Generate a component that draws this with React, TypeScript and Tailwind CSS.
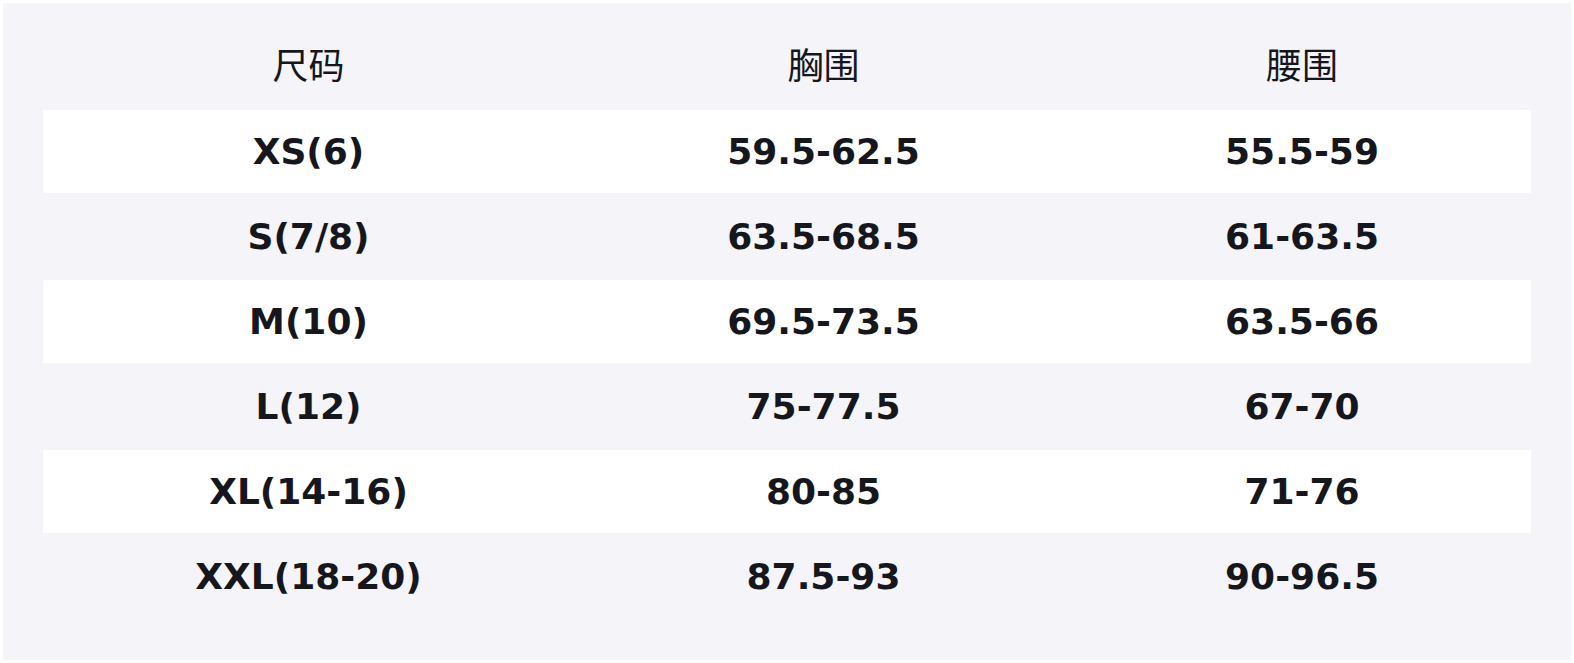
import * as React from 'react';

const rows = [
  ['XS(6)', '59.5-62.5', '55.5-59'],
  ['S(7/8)', '63.5-68.5', '61-63.5'],
  ['M(10)', '69.5-73.5', '63.5-66'],
  ['L(12)', '75-77.5', '67-70'],
  ['XL(14-16)', '80-85', '71-76'],
  ['XXL(18-20)', '87.5-93', '90-96.5'],
];

const headers = ['尺码', '胸围', '腰围'];

export default function App() {
  return (
    <div className="w-[1574px] h-[663px] bg-white p-[3px]">
      <div className="h-full bg-[#f4f4f9] px-10 pt-10 text-[#16161d]">
        <div className="grid grid-cols-[531px_499px_458px] h-[67px] items-start">
          {headers.map((h) => (
            <div
              key={h}
              className="text-center text-[36px] leading-[40px] font-normal"
              style={{ fontFamily: '"Noto Sans CJK SC", "Noto Sans", sans-serif' }}
            >
              {h}
            </div>
          ))}
        </div>
        {rows.map((r, i) => (
          <div
            key={r[0]}
            className={
              i % 2 === 0
                ? 'grid grid-cols-[531px_499px_458px] h-[83px] items-center bg-white'
                : 'grid grid-cols-[531px_499px_458px] h-[87px] items-center'
            }
          >
            {r.map((c, j) => (
              <div
                key={j}
                className="text-center text-[36px] font-bold leading-none font-['DejaVu_Sans',sans-serif]"
              >
                {c}
              </div>
            ))}
          </div>
        ))}
      </div>
    </div>
  );
}
